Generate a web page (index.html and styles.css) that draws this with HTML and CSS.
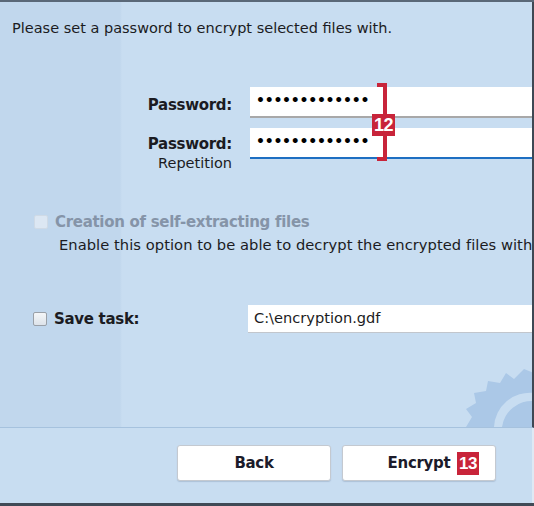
FILE: index.html
```html
<!DOCTYPE html>
<html>
<head>
<meta charset="utf-8">
<link rel="stylesheet" href="styles.css">
</head>
<body>
<div class="window">
  <div class="main">
    <p class="intro">Please set a password to encrypt selected files with.</p>
    <div class="pw-block">
      <div class="row row1">
        <div class="label"><b>Password:</b></div>
        <div class="field"><span class="dots">•••••••••••••</span></div>
      </div>
      <div class="row row2">
        <div class="label"><b>Password:</b><span class="sub">Repetition</span></div>
        <div class="field active"><span class="dots">•••••••••••••</span></div>
      </div>
      <div class="bracket"><span class="badge">12</span></div>
    </div>
    <div class="opt">
      <span class="cb disabled"></span><span class="opt-title">Creation of self-extracting files</span>
    </div>
    <div class="opt-desc">Enable this option to be able to decrypt the encrypted files with</div>
    <div class="save">
      <div class="save-label"><span class="cb"></span><b>Save task:</b></div>
      <div class="field path">C:\encryption.gdf</div>
    </div>
    <svg class="gear" width="90" height="70" viewBox="0 0 90 70">
      <path d="M22 70 L28 60 L22 52 L32 46 L30 36 L42 34 L44 24 L56 26 L62 16 L70 22 L80 12 L90 16 L90 70 Z M50 70 A36 36 0 0 1 90 36 L90 44 A30 30 0 0 0 58 70 Z" fill="#abc8e7" fill-rule="evenodd"/>
    </svg>
  </div>
  <div class="footer">
    <button class="btn">Back</button>
    <button class="btn enc">Encrypt<span class="badge small">13</span></button>
  </div>
</div>
</body>
</html>
```
FILE: styles.css
```css
* { box-sizing: border-box; }
html, body { margin: 0; padding: 0; }
body {
  width: 534px;
  height: 506px;
  overflow: hidden;
  font-family: "DejaVu Sans", Verdana, sans-serif;
  font-size: 14.5px;
  color: #1b1b22;
  background: #c8ddf1;
}
.window {
  width: 534px;
  height: 506px;
  border-top: 2px solid #5a6878;
  border-bottom: 3px solid #404a56;
  display: flex;
  flex-direction: column;
}
.main {
  position: relative;
  height: 426px;
  border-right: 2px solid #3e4854;
  border-bottom: 1px solid #a6c2de;
  background: linear-gradient(to right, #c1d7ed 0, #c1d7ed 120px, #c8ddf1 122px);
  overflow: hidden;
}
.intro {
  margin: 0;
  padding: 18px 0 0 12px;
  font-size: 14.5px;
  line-height: 17px;
  white-space: nowrap;
}
.pw-block {
  position: relative;
  margin-top: 50px;
}
.row {
  display: flex;
  align-items: flex-start;
}
.label {
  width: 232px;
  text-align: right;
  display: flex;
  flex-direction: column;
  align-items: flex-end;
  font-size: 15px;
}
.label b { letter-spacing: -0.3px; }
.sub {
  font-size: 14.5px;
  margin-top: 2px;
}
.field {
  margin-left: 18px;
  flex: 1;
  background: #fff;
  border-bottom: 2px solid #a8a8a8;
}
.row1 .label { padding-top: 9px; }
.row1 .field { height: 31px; }
.row2 { margin-top: 10px; }
.row2 .label { padding-top: 7px; }
.row2 .field { height: 31px; border-bottom: 2px solid #1e6fc2; }
.dots {
  display: block;
  padding: 5px 0 0 6px;
  font-size: 14px;
  letter-spacing: -0.25px;
  font-weight: bold;
  color: #000;
}
.bracket {
  position: absolute;
  left: 377px;
  top: -4px;
  width: 10px;
  height: 78px;
  border: 4px solid #c8243a;
  border-left: none;
}
.badge {
  display: inline-block;
  background: #c8243a;
  color: #fff;
  font-family: "Liberation Sans", Arial, sans-serif;
  font-weight: bold;
  font-size: 18px;
  line-height: 22px;
  padding: 0 2px;
  letter-spacing: -0.5px;
}
.bracket .badge {
  position: absolute;
  left: -5px;
  top: 27px;
}
.opt {
  margin-top: 42px;
  margin-left: 34px;
  display: flex;
  align-items: center;
  gap: 7px;
}
.cb {
  display: inline-block;
  width: 14px;
  height: 14px;
  border: 1px solid #9aa0a8;
  border-radius: 2px;
  background: linear-gradient(#f4f6f8, #dde3ea);
}
.cb.disabled {
  border-color: #cfdae6;
  background: #dce7f3;
}
.opt-title {
  color: #8594a8;
  font-weight: bold;
  font-size: 15px;
  letter-spacing: -0.3px;
}
.opt-desc {
  margin: 5px 0 0 59px;
  font-size: 14.7px;
  letter-spacing: 0.05px;
  white-space: nowrap;
}
.save {
  margin-top: 52px;
  display: flex;
  align-items: center;
}
.save-label {
  width: 248px;
  padding-left: 33px;
  display: flex;
  align-items: center;
  gap: 7px;
  font-size: 15px;
}
.save-label b { letter-spacing: -0.3px; }
.field.path {
  margin-left: 0;
  height: 28px;
  border-bottom: 1px solid #c2c6cc;
  padding: 4px 0 0 6px;
  font-size: 14.6px;
}
.gear {
  position: absolute;
  right: -2px;
  bottom: 0;
}
.footer {
  flex: 1;
  display: flex;
  align-items: flex-start;
  padding: 17px 0 0 177px;
  gap: 11px;
  border-right: 2px solid #dfe9f4;
}
.btn {
  position: relative;
  width: 154px;
  height: 36px;
  background: #fff;
  border: 1px solid #c4c9d0;
  border-radius: 3px;
  box-shadow: 0 1px 1px rgba(90,110,140,0.25);
  font-family: "DejaVu Sans", Verdana, sans-serif;
  font-weight: bold;
  font-size: 15px;
  letter-spacing: -0.3px;
  color: #1b1b2a;
  padding: 0;
  display: flex;
  align-items: center;
  justify-content: center;
}
.btn .badge.small {
  position: absolute;
  left: 114px;
  top: 6px;
  font-size: 17px;
  line-height: 23px;
  letter-spacing: -0.5px;
}
```
